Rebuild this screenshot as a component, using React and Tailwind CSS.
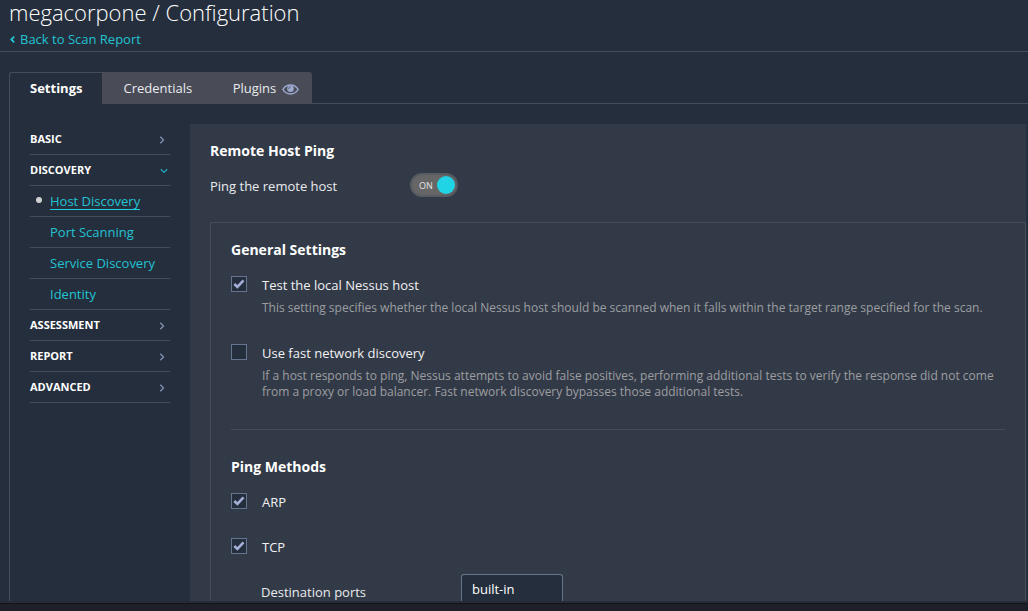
import React from "react";

const RULE = "border-[#464c58]";

function Chevron({ down }) {
  return down ? (
    <svg className="mr-[2px] mt-[2px] h-[6px] w-[8px]" viewBox="0 0 8 6" fill="none" stroke="#1fa9b9" strokeWidth="1.3">
      <path d="M0.8 1.2 L4 4.4 L7.2 1.2" />
    </svg>
  ) : (
    <svg className="mr-[5px] mt-[2px] h-[8px] w-[6px]" viewBox="0 0 6 8" fill="none" stroke="#8391b4" strokeWidth="1.3">
      <path d="M1.3 0.8 L4.5 4 L1.3 7.2" />
    </svg>
  );
}

function Section({ label, down }) {
  return (
    <div className={`flex h-[31px] items-center justify-between border-b ${RULE}`}>
      <span className="text-[11px] font-bold text-white">{label}</span>
      <Chevron down={down} />
    </div>
  );
}

function SubItem({ label, active }) {
  return (
    <div className={`flex h-[31px] items-center border-b ${RULE}`}>
      <span className="flex w-5 pl-[6px]">
        {active && <span className="-mt-[2px] size-[6px] rounded-full bg-[#d0d0d0]" />}
      </span>
      <span className={active ? "mt-px h-[17px] border-b border-[#1fcfe0] leading-[16px] text-[#22c3d3]" : "mt-px h-[17px] leading-[16px] text-[#22c3d3]"}>
        {label}
      </span>
    </div>
  );
}

function Checkbox({ checked }) {
  return (
    <span className="flex size-4 shrink-0 items-center justify-center border border-[#66758f] bg-[#252e3c]">
      {checked && (
        <svg className="h-[10px] w-[12px]" viewBox="0 0 12 10" fill="none" stroke="#a3afd6" strokeWidth="2.6">
          <path d="M1.3 5 L4.4 8 L10.5 1.4" />
        </svg>
      )}
    </span>
  );
}

function Option({ label, checked }) {
  return (
    <div className="flex h-4 items-start gap-[15px]">
      <Checkbox checked={checked} />
      <span className="leading-[18px] text-[#f0f1f3]">{label}</span>
    </div>
  );
}

function Eye() {
  return (
    <svg className="mt-[2px] h-[11px] w-[17px]" viewBox="0 0 17 11" fill="none" stroke="#9ba8d0">
      <path d="M0.9 5.5 C4.2 -0.6 12.8 -0.6 16.1 5.5 C12.8 11.4 4.2 11.4 0.9 5.5 Z" strokeWidth="1.5" />
      <circle cx="8.5" cy="4.8" r="3.3" fill="#9ba8d0" stroke="none" />
      <path d="M6.8 4.8 C6.8 3.7 7.5 2.9 8.5 2.9" stroke="#494c58" strokeWidth="1" />
    </svg>
  );
}

export default function App() {
  return (
    <div className="flex h-[611px] w-[1028px] flex-col overflow-hidden bg-[#252e3c] font-['Open_Sans',sans-serif] text-[13px] text-[#e9ebee]">
      <header className={`h-[52px] shrink-0 border-b pl-[9px] ${RULE}`}>
        <h1 className="h-[30px] text-[22px] leading-[24px] font-light text-white">megacorpone / Configuration</h1>
        <a className="flex h-[18px] items-center gap-[5px] leading-[18px] text-[#22c3d3]">
          <svg className="ml-px h-[7px] w-[5px]" viewBox="0 0 5 7" fill="none" stroke="#1fcfe0" strokeWidth="1.7">
            <path d="M4.2 0.6 L1.3 3.5 L4.2 6.4" />
          </svg>
          Back to Scan Report
        </a>
      </header>

      <div className="flex h-[549px] shrink-0 flex-col overflow-hidden pt-5 pl-[9px]">
        <nav className="flex h-8 shrink-0">
          <div className={`flex w-[93px] items-center rounded-tl-[3px] border-t border-l pl-5 font-bold text-white ${RULE}`}>Settings</div>
          <div className="flex w-[210px] items-center rounded-tr-[3px] bg-[#494c57] pl-[21.5px]">
            <span className="mt-[2px]">Credentials</span>
            <span className="mt-[2px] mr-[6px] ml-[40.5px]">Plugins</span>
            <Eye />
          </div>
          <div className={`flex-1 border-b ${RULE}`} />
        </nav>

        <div className={`flex flex-1 border-l pt-5 ${RULE}`}>
          <aside className="mr-5 ml-5 w-[140px] shrink-0">
            <Section label="BASIC" />
            <Section label="DISCOVERY" down />
            <SubItem label="Host Discovery" active />
            <SubItem label="Port Scanning" />
            <SubItem label="Service Discovery" />
            <SubItem label="Identity" />
            <Section label="ASSESSMENT" />
            <Section label="REPORT" />
            <Section label="ADVANCED" />
          </aside>

          <main className="flex w-[836px] shrink-0 flex-col bg-[#333a47] pl-5">
            <h2 className="mt-[18px] text-[14px] leading-[18px] font-bold text-white">Remote Host Ping</h2>
            <div className="mt-[13px] flex h-6 items-center">
              <span className="mt-[4px] w-[200px]">Ping the remote host</span>
              <span className="flex h-6 w-12 items-center justify-between rounded-full border-2 border-[#575b62] bg-[#666666] pr-px pl-[7px]">
                <span className="mt-px text-[9px] text-[#e4e4e4]">ON</span>
                <span className="size-[18px] rounded-full bg-[#20d3e5]" />
              </span>
            </div>

            <section className={`mt-[25px] flex flex-1 flex-col border border-b-0 pr-5 pl-5 ${RULE}`}>
              <h3 className="mt-[18px] mb-[17px] text-[14px] leading-[18px] font-bold text-white">General Settings</h3>
              <Option label="Test the local Nessus host" checked />
              <p className="mt-[8px] ml-[31px] text-[12px] leading-4 text-[#9c9ea2]">
                This setting specifies whether the local Nessus host should be scanned when it falls within the target range specified for the scan.
              </p>
              <div className="mt-[28px]">
                <Option label="Use fast network discovery" />
              </div>
              <p className="mt-[8px] ml-[31px] text-[12px] leading-4 text-[#9c9ea2]">
                If a host responds to ping, Nessus attempts to avoid false positives, performing additional tests to verify the response did not come
                <br />
                from a proxy or load balancer. Fast network discovery bypasses those additional tests.
              </p>
              <div className={`mt-[29px] w-[774px] border-t ${RULE}`} />
              <h3 className="mt-7 mb-[17px] text-[14px] leading-[18px] font-bold text-white">Ping Methods</h3>
              <Option label="ARP" checked />
              <div className="mt-[29px] mb-5">
                <Option label="TCP" checked />
              </div>
              <div className="flex h-[27px] shrink-0 items-start">
                <span className="mt-[9px] ml-[30px] w-[200px] leading-[18px]">Destination ports</span>
                <div className="h-[27px] w-[102px] rounded-t-[3px] border border-b-0 border-[#66758f] bg-[#252e3c] pt-[5px] pl-[10px] leading-[18px] text-white">built-in</div>
              </div>
            </section>
          </main>
        </div>
      </div>
      <div className="h-[10px] shrink-0 border-t-2 border-[#292c38] bg-[#1e1f28]">
        <div className="h-px bg-[#13141a]" />
      </div>
    </div>
  );
}
